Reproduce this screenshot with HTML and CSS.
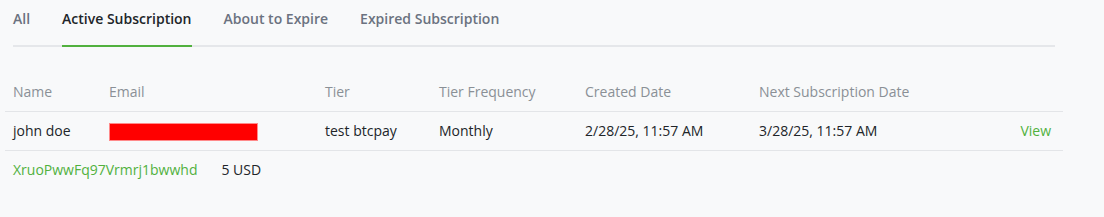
FILE: index.html
```html
<!DOCTYPE html>
<html lang="en">
<head>
    <meta charset="UTF-8">
    <meta name="viewport" content="width=device-width, initial-scale=1.0">
    <title>Subscriptions</title>
    <link rel="stylesheet" href="styles.css">
</head>
<body>
    <div class="page">
        <nav class="tabs">
            <a href="#" class="tab">All</a>
            <a href="#" class="tab active">Active Subscription</a>
            <a href="#" class="tab">About to Expire</a>
            <a href="#" class="tab">Expired Subscription</a>
        </nav>
        <table class="subs-table">
            <colgroup>
                <col class="c-name">
                <col class="c-email">
                <col class="c-tier">
                <col class="c-freq">
                <col class="c-created">
                <col class="c-next">
                <col class="c-action">
            </colgroup>
            <thead>
                <tr>
                    <th>Name</th>
                    <th>Email</th>
                    <th>Tier</th>
                    <th>Tier Frequency</th>
                    <th>Created Date</th>
                    <th>Next Subscription Date</th>
                    <th></th>
                </tr>
            </thead>
            <tbody>
                <tr class="main-row">
                    <td>john doe</td>
                    <td><span class="redacted" title="email hidden"></span></td>
                    <td>test btcpay</td>
                    <td>Monthly</td>
                    <td>2/28/25, 11:57 AM</td>
                    <td>3/28/25, 11:57 AM</td>
                    <td class="action"><a href="#">View</a></td>
                </tr>
                <tr class="detail-row">
                    <td colspan="7">
                        <div class="detail">
                            <a href="#">XruoPwwFq97Vrmrj1bwwhd</a>
                            <span>5 USD</span>
                        </div>
                    </td>
                </tr>
            </tbody>
        </table>
    </div>
</body>
</html>
```

FILE: styles.css
```css
body {
    margin: 0;
    background: #f8f9fa;
    font-family: "Open Sans", Arial, sans-serif;
    font-size: 14px;
    color: #212529;
}
a {
    text-decoration: none;
}
.page {
    padding: 0 41px 0 5px;
}
.tabs {
    display: flex;
    gap: 32px;
    margin: 0 8px;
    padding-top: 8px;
    border-bottom: 2px solid #e5e7ea;
}
.tabs .tab {
    font-weight: 600;
    line-height: 21px;
    padding-bottom: 16px;
    margin-bottom: -2px;
    border-bottom: 2px solid transparent;
    color: #6b7280;
}
.tabs .tab.active {
    color: #212529;
    border-bottom-color: #51b13e;
}
.subs-table {
    width: 1058px;
    margin-top: 26px;
    border-collapse: collapse;
    table-layout: fixed;
}
.c-name { width: 96px; }
.c-email { width: 216px; }
.c-tier { width: 114px; }
.c-freq { width: 146px; }
.c-created { width: 174px; }
.c-next { width: 200px; }
.subs-table th {
    text-align: left;
    font-weight: 400;
    color: #8a9096;
    padding: 9px 8px;
    line-height: 20px;
    border-bottom: 1px solid #e3e5e8;
}
.subs-table td {
    padding: 9px 8px;
    line-height: 20px;
    white-space: nowrap;
}
.main-row td {
    border-bottom: 1px solid #e3e5e8;
}
.subs-table td.action {
    text-align: right;
    padding-right: 12px;
}
.action a, .detail a {
    color: #51b13e;
}
.redacted {
    display: inline-block;
    width: 147px;
    height: 16px;
    margin-left: 1px;
    vertical-align: middle;
    background: #ff0000;
    box-shadow: 0 0 0 1px #ff8a8a;
}
.detail {
    display: flex;
    gap: 24px;
}
```
